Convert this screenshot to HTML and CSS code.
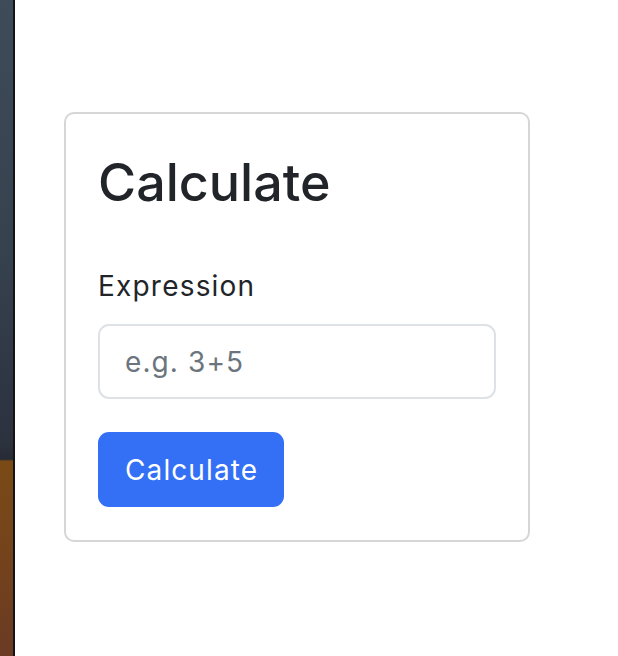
FILE: index.html
```html
<!DOCTYPE html>
<html lang="en">
<head>
<meta charset="utf-8">
<title>Calculate</title>
<link rel="stylesheet" href="styles.css">
</head>
<body>
<div class="page">
  <div class="side"></div>
  <main class="main">
    <form class="card" onsubmit="return false;">
      <h2 class="card-title">Calculate</h2>
      <label class="form-label" for="expr">Expression</label>
      <input class="form-control" id="expr" type="text" placeholder="e.g. 3+5">
      <button class="btn" type="submit">Calculate</button>
    </form>
  </main>
</div>
</body>
</html>
```
FILE: styles.css
```css
* { box-sizing: border-box; }
html, body { margin: 0; padding: 0; height: 100%; background: #fff; }
body {
  font-family: Inter, "Noto Sans", "Liberation Sans", sans-serif;
  color: #212529;
}
.page {
  display: flex;
  height: 656px;
}
.side {
  width: 15px;
  flex: none;
  border-right: 2px solid #141416;
  background:
    linear-gradient(180deg, #3e4b58 0%, #36414e 40%, #2c313e 68%, #262a35 70%, #7a4a16 70.3%, #74431c 85%, #6a3a24 100%);
}
.main {
  flex: 1;
  padding: 112px 0 0 49px;
}
.card {
  width: 466px;
  border: 2px solid #d6d6d6;
  border-radius: 10px;
  padding: 36px 32px 33px;
  display: flex;
  flex-direction: column;
  align-items: flex-start;
}
.card-title {
  margin: 0 0 50px;
  font-size: 52px;
  font-weight: 500;
  line-height: 65px;
  color: #212529;
}
.form-label {
  font-size: 28px;
  line-height: 42px;
  letter-spacing: 1.2px;
  margin-bottom: 17px;
  color: #212529;
}
.form-control {
  width: 100%;
  height: 75px;
  border: 2px solid #dee2e6;
  border-radius: 11px;
  padding: 0 25px;
  font-family: inherit;
  font-size: 28px;
  letter-spacing: 1.1px;
  color: #212529;
  background: #fff;
  margin: 0 0 33px;
  outline: none;
}
.form-control::placeholder { color: #6c757d; opacity: 1; }
.btn {
  height: 75px;
  padding: 0 26px 0 27px;
  border: 0;
  border-radius: 11px;
  background: #3470f5;
  color: #fff;
  font-family: inherit;
  font-size: 28px;
  line-height: 42px;
  letter-spacing: 1.1px;
}
```
